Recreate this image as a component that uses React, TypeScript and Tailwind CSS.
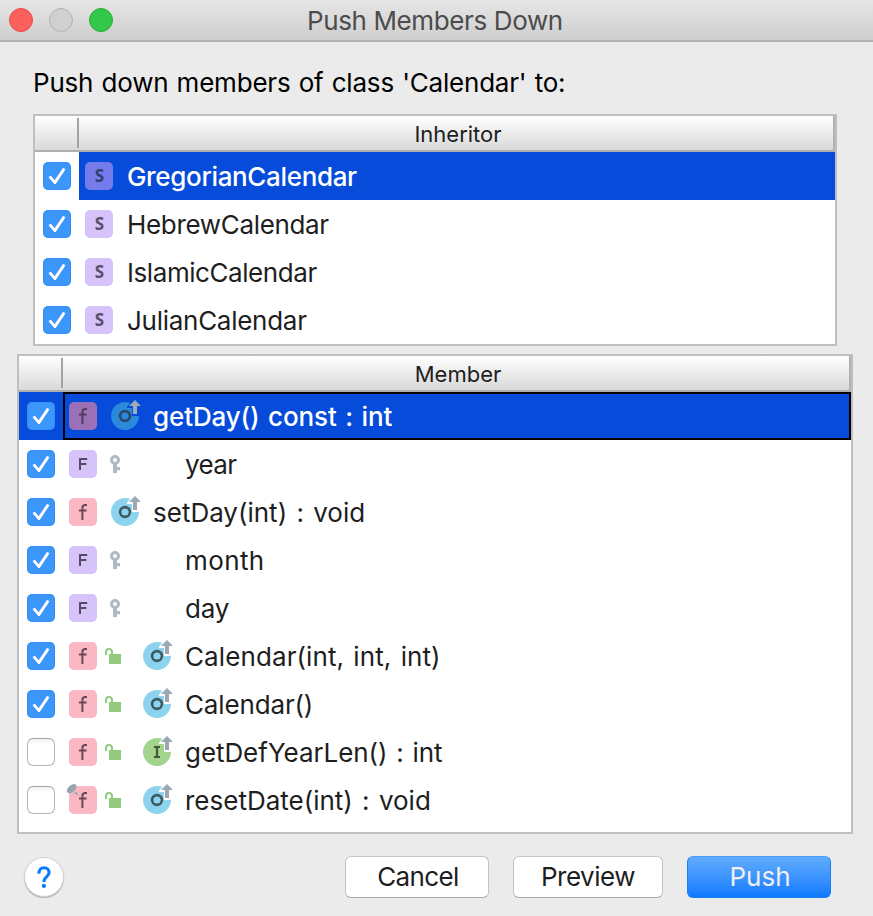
import React from "react";

type MemberKind = "method" | "field";
type Override = "overridden" | "implemented";

interface Member {
  label: string;
  spacing: string;
  kind: MemberKind;
  access?: "protected" | "public";
  override?: Override;
  checked: boolean;
  selected?: boolean;
  isStatic?: boolean;
}

const inheritors = [
  { name: "GregorianCalendar", selected: true, spacing: "tracking-[-0.34px]" },
  { name: "HebrewCalendar", selected: false, spacing: "tracking-[-0.33px]" },
  { name: "IslamicCalendar", selected: false, spacing: "tracking-[-0.43px]" },
  { name: "JulianCalendar", selected: false, spacing: "tracking-[-0.27px]" },
];

const members: Member[] = [
  { label: "getDay() const : int", spacing: "tracking-[-0.12px] [word-spacing:1.7px]", kind: "method", override: "overridden", checked: true, selected: true },
  { label: "year", spacing: "tracking-[-0.6px]", kind: "field", access: "protected", checked: true },
  { label: "setDay(int) : void", spacing: "tracking-[0px] [word-spacing:2px]", kind: "method", override: "overridden", checked: true },
  { label: "month", spacing: "tracking-[0.4px]", kind: "field", access: "protected", checked: true },
  { label: "day", spacing: "tracking-[-0.2px]", kind: "field", access: "protected", checked: true },
  { label: "Calendar(int, int, int)", spacing: "tracking-[0.1px] [word-spacing:1.8px]", kind: "method", access: "public", override: "overridden", checked: true },
  { label: "Calendar()", spacing: "tracking-[-0.15px]", kind: "method", access: "public", override: "overridden", checked: true },
  { label: "getDefYearLen() : int", spacing: "tracking-[-0.07px] [word-spacing:1.6px]", kind: "method", access: "public", override: "implemented", checked: false },
  { label: "resetDate(int) : void", spacing: "tracking-[0px] [word-spacing:2px]", kind: "method", access: "public", override: "overridden", checked: false, isStatic: true },
];

function Checkbox({ checked }: { checked: boolean }) {
  if (!checked) {
    return (
      <span className="block size-7 shrink-0 rounded-[6px] border border-[#b4b4b4] border-t-[#a2a2a2] bg-white bg-linear-to-b from-[#f0f0f0] to-white to-20%" />
    );
  }
  return (
    <svg viewBox="0 0 28 28" className="block size-7 shrink-0">
      <rect width="28" height="28" rx="5" fill="#3b97fb" />
      <rect x="0.5" y="0.5" width="27" height="27" rx="4.5" fill="none" stroke="#3289ee" strokeOpacity="0.5" />
      <path d="M7.5 16.2l4.4 5.4L20.6 8.6" fill="none" stroke="#1c6cc8" strokeOpacity="0.35" strokeWidth="2.8" strokeLinecap="round" strokeLinejoin="round" />
      <path d="M7.4 15.4l4.5 5.2L20.6 7.6" fill="none" stroke="#fff" strokeWidth="2.9" strokeLinecap="round" strokeLinejoin="round" />
    </svg>
  );
}

function StructIcon({ selected }: { selected: boolean }) {
  return (
    <span
      className={`flex size-7 shrink-0 items-center justify-center rounded-[5px] pb-px pl-px font-['Open_Sans',sans-serif] text-[17px] font-bold leading-none ${
        selected ? "bg-[#767beb] text-[#31416f]" : "bg-[#d5c3fa] text-[#58506a]"
      }`}
    >
      S
    </span>
  );
}

function MemberIcon({ kind, selected, isStatic }: { kind: MemberKind; selected?: boolean; isStatic?: boolean }) {
  const bg = selected ? "#9a70b6" : kind === "method" ? "#fbb7c4" : "#d5c3fa";
  const ink = selected ? "#503c5f" : kind === "method" ? "#644a52" : "#544c63";
  return (
    <svg viewBox="0 0 28 28" className="block size-7 shrink-0 overflow-visible">
      <rect width="28" height="28" rx="5" fill={bg} />
      {kind === "method" ? (
        <path d="M18 7h-1.6Q13.4 7 13.4 10v12M10 12.5h7.6" fill="none" stroke={ink} strokeWidth="2" />
      ) : (
        <path d="M11 20V9h7.2M11 14.1h6.4" fill="none" stroke={ink} strokeWidth="2" />
      )}
      {isStatic && (
        <>
          <ellipse cx="2.7" cy="2.7" rx="5.7" ry="3.5" transform="rotate(-43 2.7 2.7)" fill="#98a5b0" />
          <path d="M5 7l5 3-2.6-4.6z" fill="#9aa7b0" />
        </>
      )}
    </svg>
  );
}

function AccessIcon({ access }: { access: "protected" | "public" }) {
  if (access === "protected") {
    return (
      <svg viewBox="0 0 10 18" className="ml-[5px] block h-[18px] w-2.5 shrink-0">
        <circle cx="5" cy="5" r="3.5" fill="none" stroke="#aebac2" strokeWidth="3" />
        <path d="M3 9h4v3h3v3.2H7V18H3z" fill="#aebac2" />
      </svg>
    );
  }
  return (
    <svg viewBox="0 0 16 16" className="block size-4 shrink-0">
      <path d="M4 6h12v10H4z" fill="#93ca7d" />
      <path d="M1 7V4a3 3 0 0 1 6 0v2" fill="none" stroke="#93ca7d" strokeWidth="2" />
    </svg>
  );
}

function OverrideIcon({ type, selected }: { type: Override; selected?: boolean }) {
  const bg = type === "implemented" ? "#a2d48e" : selected ? "#2b89dc" : "#8cd4ed";
  const ink = selected ? "#27486c" : type === "implemented" ? "#46573f" : "#415a66";
  return (
    <svg viewBox="0 0 28 28" className="block size-7 shrink-0 overflow-visible">
      <path d="M21 14h7a14 14 0 1 1-8.6-12.9L16 4.4V6h5z" fill={bg} />
      {type === "overridden" ? (
        <circle cx="14" cy="14" r="4.9" fill="none" stroke={ink} strokeWidth="2.6" />
      ) : (
        <path d="M11 9h6M11 19h6M14 9v10" fill="none" stroke={ink} strokeWidth="2.2" />
      )}
      <path d="M24-2l6 6h-4v8h-4V4h-4z" fill={selected ? "#9eabb5" : "#9aa7b0"} />
    </svg>
  );
}

function TableHeader({ title }: { title: string }) {
  return (
    <div className="flex h-9 shrink-0 items-stretch border-b-2 border-[#afafaf] bg-linear-to-b from-white to-[#d9d9d9]">
      <div className="my-0.5 w-11 shrink-0 border-r-2 border-[#a2a2a2]" />
      <div className="flex flex-1 items-center justify-center border-r-2 border-[#b2b2b2] pt-0.5 pl-1 text-[22px] leading-none text-[#1e1e1e]">
        {title}
      </div>
    </div>
  );
}

function MemberRow({ member }: { member: Member }) {
  const { label, spacing, kind, access, override, checked, selected, isStatic } = member;
  return (
    <div className={`flex h-12 shrink-0 ${selected ? "bg-[#064bda] font-medium text-white" : "text-[#1e1e1e]"}`}>
      <div className="flex w-11 shrink-0 items-center pl-2">
        <Checkbox checked={checked} />
      </div>
      <div className={`flex flex-1 items-center border-2 pl-1 ${selected ? "border-black" : "border-transparent"}`}>
        <MemberIcon kind={kind} selected={selected} isStatic={isStatic} />
        <div className={`flex shrink-0 items-center pl-2 ${access ? "w-[46px]" : "w-3.5"}`}>
          {access && <AccessIcon access={access} />}
        </div>
        <div className="flex w-[42px] shrink-0 items-center">
          {override && <OverrideIcon type={override} selected={selected} />}
        </div>
        <span className={`whitespace-pre pt-0.5 text-[26px] leading-none ${spacing}`}>{label}</span>
      </div>
    </div>
  );
}

export default function App() {
  return (
    <div className="flex h-[916px] w-[873px] flex-col overflow-hidden bg-[#ebebeb] font-['Inter',sans-serif]">
      <header className="flex h-[42px] shrink-0 items-center border-b-2 border-[#b1b1b1] bg-linear-to-b from-[#e6e6e6] to-[#cecece] pl-[9px]">
        <div className="flex w-[298px] gap-4">
          <span className="size-6 rounded-full border border-[#e9494a] bg-[#fc605c]" />
          <span className="size-6 rounded-full border border-[#b2b2b2] bg-[#d0d0d0]" />
          <span className="size-6 rounded-full border border-[#28ad36] bg-[#34c84a]" />
        </div>
        <h1 className="whitespace-pre pt-0.5 text-[26px] leading-none tracking-[-0.38px] text-[#4c4c4c]">Push Members Down</h1>
      </header>

      <p className="mt-[27px] ml-[33px] whitespace-pre text-[26px] leading-7 tracking-[-0.2px] text-black [word-spacing:1.1px]">
        Push down members of class 'Calendar' to:
      </p>

      <section className="mt-[17px] ml-[33px] flex h-[232px] w-[804px] shrink-0 flex-col border-2 border-[#bfbfbf] bg-white">
        <TableHeader title="Inheritor" />
        {inheritors.map((item) => (
          <div key={item.name} className="flex h-12 shrink-0">
            <div className="flex w-11 shrink-0 items-center pl-2">
              <Checkbox checked />
            </div>
            <div
              className={`flex flex-1 items-center gap-3.5 pl-1.5 ${
                item.selected ? "bg-[#064bda] font-medium text-white" : "text-[#1e1e1e]"
              }`}
            >
              <StructIcon selected={item.selected} />
              <span className={`whitespace-pre pt-0.5 text-[26px] leading-none ${item.spacing}`}>{item.name}</span>
            </div>
          </div>
        ))}
      </section>

      <section className="mt-2 ml-[17px] flex h-[480px] w-[836px] shrink-0 flex-col border-2 border-[#bfbfbf] bg-white">
        <TableHeader title="Member" />
        {members.map((member) => (
          <MemberRow key={member.label} member={member} />
        ))}
      </section>

      <footer className="mt-[22px] flex items-start pl-6">
        <button className="mt-px flex size-10 items-center justify-center rounded-full border border-[#d2d2d2] bg-white shadow-[0_1px_1px_rgba(0,0,0,0.25)]">
          <svg viewBox="0 0 14 22" className="block h-[22px] w-3.5">
            <path d="M1.9 7.8C1.9 3.8 4 1.8 7 1.8s5.1 1.9 5.1 4.8c0 4.2-5.2 4-5.2 9.4" fill="none" stroke="#0a7aff" strokeWidth="3.1" />
            <circle cx="6.9" cy="19.9" r="2.1" fill="#0a7aff" />
          </svg>
        </button>
        <button className="ml-[281px] h-[42px] w-36 rounded-[6px] border border-[#c4c4c4] border-b-[#aaaaaa] bg-white pl-0.5 text-[26px] leading-none tracking-[-0.6px] text-[#1e1e1e]">
          Cancel
        </button>
        <button className="ml-6 h-[42px] w-[150px] rounded-[6px] border border-[#c4c4c4] border-b-[#aaaaaa] bg-white text-[26px] leading-none tracking-[-0.5px] text-[#1e1e1e]">
          Preview
        </button>
        <button className="ml-6 h-[42px] w-36 rounded-[6px] border border-[#1a7df8] border-t-[#4a9cfb] bg-linear-to-b from-[#60acfd] to-[#0a7aff] pl-0.5 text-[26px] leading-none text-[#f0f0f0]">
          Push
        </button>
      </footer>
    </div>
  );
}
